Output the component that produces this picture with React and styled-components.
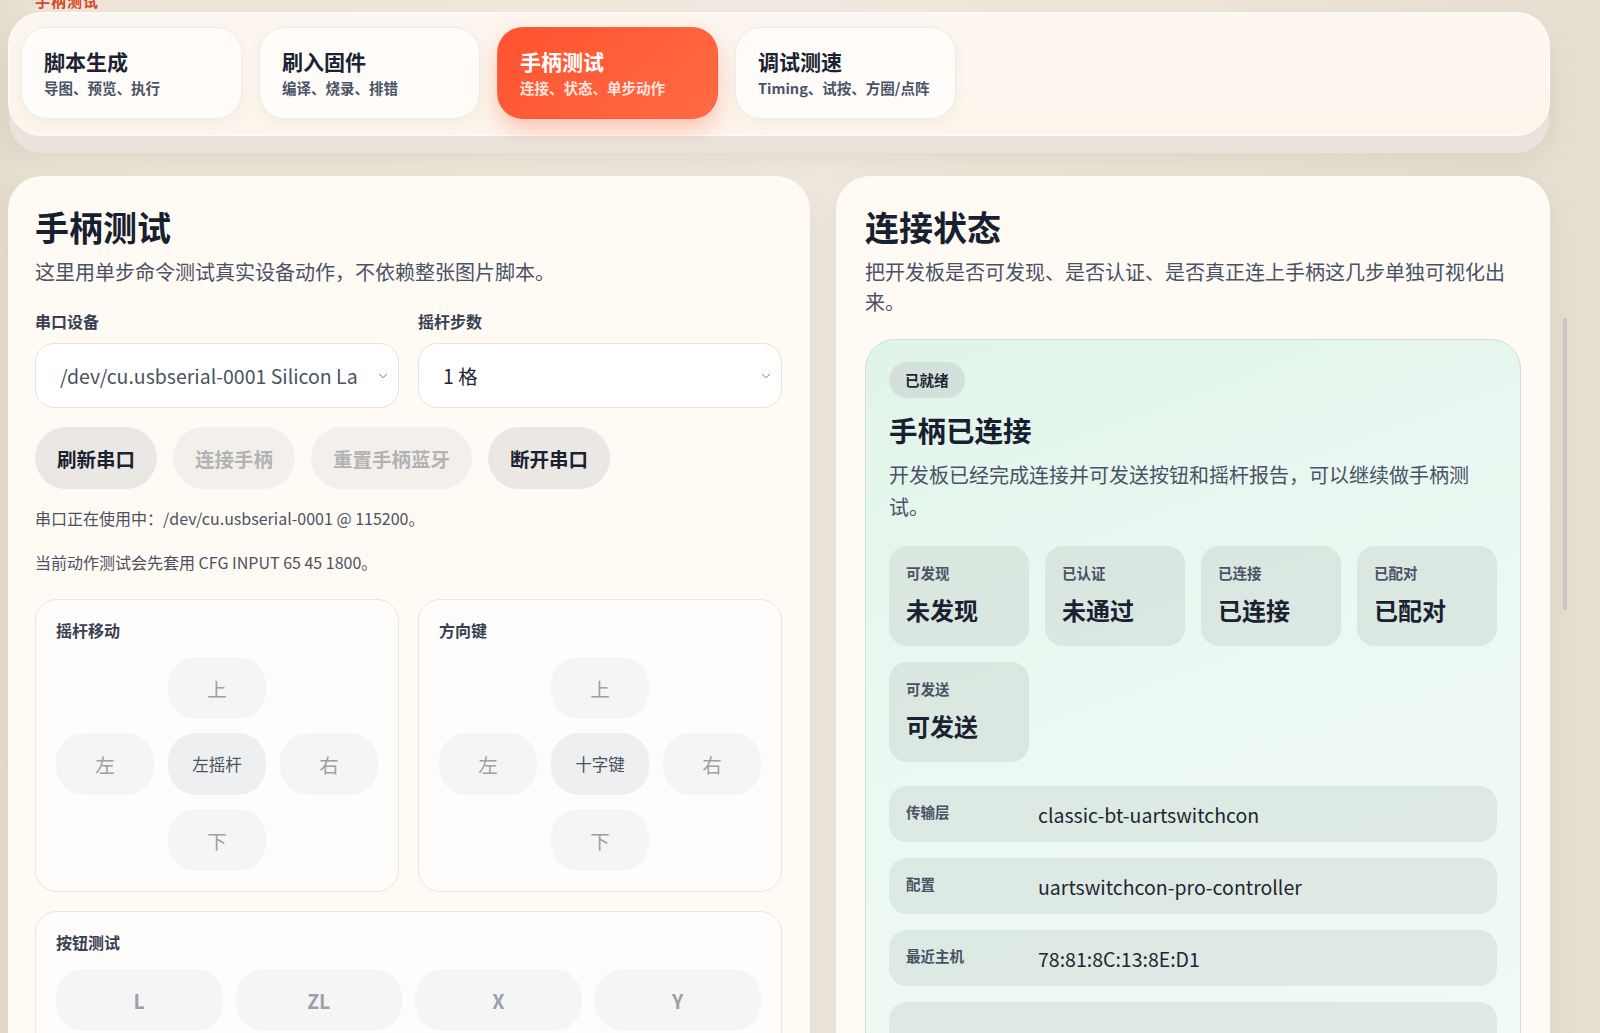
import styled, { createGlobalStyle } from "styled-components";
import { ChevronDown } from "lucide-react";

const tabs = [
  { title: "脚本生成", sub: "导图、预览、执行" },
  { title: "刷入固件", sub: "编译、烧录、排错" },
  { title: "手柄测试", sub: "连接、状态、单步动作", active: true },
  { title: "调试测速", sub: "Timing、试按、方圈/点阵" },
];

const flags = [
  { label: "可发现", value: "未发现" },
  { label: "已认证", value: "未通过" },
  { label: "已连接", value: "已连接" },
  { label: "已配对", value: "已配对" },
  { label: "可发送", value: "可发送" },
];

const infos = [
  { label: "传输层", value: "classic-bt-uartswitchcon" },
  { label: "配置", value: "uartswitchcon-pro-controller" },
  { label: "最近主机", value: "78:81:8C:13:8E:D1" },
  { label: "", value: "" },
];

const App = () => {
  return (
    <>
      <GlobalStyle />
      <ScrollThumb />
      <Page>
        <Kicker>手柄测试</Kicker>
        <Nav>
          {tabs.map((t) => (
            <Tab key={t.title} $active={t.active}>
              <TabTitle>{t.title}</TabTitle>
              <TabSub $active={t.active}>{t.sub}</TabSub>
            </Tab>
          ))}
        </Nav>

        <Columns>
          <Panel>
            <Title>手柄测试</Title>
            <Lead>这里用单步命令测试真实设备动作，不依赖整张图片脚本。</Lead>

            <FieldRow>
              <Field>
                <Label>串口设备</Label>
                <SelectWrap>
                  <Select $muted defaultValue="a">
                    <option value="a">/dev/cu.usbserial-0001 Silicon Labs</option>
                  </Select>
                  <Chevron size={14} strokeWidth={1.4} />
                </SelectWrap>
              </Field>
              <Field>
                <Label>摇杆步数</Label>
                <SelectWrap>
                  <Select defaultValue="1">
                    <option value="1">1 格</option>
                  </Select>
                  <Chevron size={14} strokeWidth={1.4} />
                </SelectWrap>
              </Field>
            </FieldRow>

            <ButtonRow>
              <Pill>刷新串口</Pill>
              <Pill $disabled>连接手柄</Pill>
              <Pill $disabled>重置手柄蓝牙</Pill>
              <Pill>断开串口</Pill>
            </ButtonRow>

            <Note>串口正在使用中：/dev/cu.usbserial-0001 @ 115200。</Note>
            <Note $gap>当前动作测试会先套用 CFG INPUT 65 45 1800。</Note>

            <PadRow>
              <Card>
                <CardTitle>摇杆移动</CardTitle>
                <Cross>
                  <span />
                  <Key>上</Key>
                  <span />
                  <Key>左</Key>
                  <Key $center>左摇杆</Key>
                  <Key>右</Key>
                  <span />
                  <Key>下</Key>
                  <span />
                </Cross>
              </Card>
              <Card>
                <CardTitle>方向键</CardTitle>
                <Cross>
                  <span />
                  <Key>上</Key>
                  <span />
                  <Key>左</Key>
                  <Key $center>十字键</Key>
                  <Key>右</Key>
                  <span />
                  <Key>下</Key>
                  <span />
                </Cross>
              </Card>
            </PadRow>

            <Card $wide>
              <CardTitle>按钮测试</CardTitle>
              <ButtonGrid>
                {["L", "ZL", "X", "Y", "R", "ZR", "A", "B"].map((b) => (
                  <Key key={b} $bold>{b}</Key>
                ))}
              </ButtonGrid>
            </Card>
          </Panel>

          <Panel $right>
            <Title>连接状态</Title>
            <Lead $narrow>把开发板是否可发现、是否认证、是否真正连上手柄这几步单独可视化出来。</Lead>

            <StatusCard>
              <Badge>已就绪</Badge>
              <StatusTitle>手柄已连接</StatusTitle>
              <StatusText>开发板已经完成连接并可发送按钮和摇杆报告，可以继续做手柄测试。</StatusText>

              <FlagGrid>
                {flags.map((f) => (
                  <Flag key={f.label}>
                    <FlagLabel>{f.label}</FlagLabel>
                    <FlagValue>{f.value}</FlagValue>
                  </Flag>
                ))}
              </FlagGrid>

              <InfoList>
                {infos.map((i, ind) => (
                  <InfoRow key={ind}>
                    <InfoLabel>{i.label}</InfoLabel>
                    <InfoValue>{i.value}</InfoValue>
                  </InfoRow>
                ))}
              </InfoList>
            </StatusCard>
          </Panel>
        </Columns>
      </Page>
    </>
  );
};
export default App;

const GlobalStyle = createGlobalStyle`
  html, body {
    margin: 0;
    padding: 0;
    height: 1033px;
    overflow: hidden;
  }
  body {
    background: linear-gradient(90deg, #e4dccd 0%, #ece5d8 3%, #efe9df 50%, #e6decf 100%);
    font-family: "Noto Sans CJK SC", "Noto Sans", sans-serif;
    color: #1b2333;
  }
  * { box-sizing: border-box; }
`;

const ScrollThumb = styled.div`
  position: fixed;
  right: 33px;
  top: 318px;
  width: 4px;
  height: 292px;
  border-radius: 2px;
  background: #c9c6c1;
`;

const Page = styled.div`
  padding: 0 50px 0 8px;
`;

const Kicker = styled.div`
  margin: -9px 0 0 27px;
  height: 21px;
  font-size: 15px;
  line-height: 20px;
  font-weight: 700;
  color: #d8472a;
  letter-spacing: 1px;
`;

const Nav = styled.nav`
  display: flex;
  gap: 17px;
  padding: 14px 12px 16px;
  background: linear-gradient(180deg, #fbf6ef 0%, #fcf5ec 100%);
  border: 1px solid rgba(255, 255, 255, 0.8);
  border-radius: 34px;
  box-shadow: 0 18px 0 -1px #e9e4db, 0 22px 26px rgba(160, 140, 110, 0.18);
  margin-bottom: 40px;
`;

const Tab = styled.div`
  width: 221px;
  height: 92px;
  padding: 19px 22px;
  border-radius: 26px;
  display: flex;
  flex-direction: column;
  gap: 3px;
  background: ${(p) =>
    p.$active ? "linear-gradient(135deg, #ff5330 0%, #ff6a44 100%)" : "#fffcfa"};
  border: 1px solid ${(p) => (p.$active ? "transparent" : "#f1ebe4")};
  color: ${(p) => (p.$active ? "#ffffff" : "#1b2333")};
  box-shadow: ${(p) =>
    p.$active
      ? "0 10px 22px rgba(255, 92, 56, 0.32)"
      : "0 4px 12px rgba(170, 150, 120, 0.08)"};
`;

const TabTitle = styled.div`
  font-size: 21px;
  line-height: 28px;
  font-weight: 700;
`;

const TabSub = styled.div`
  font-size: 14.5px;
  line-height: 20px;
  font-weight: 700;
  color: ${(p) => (p.$active ? "rgba(255,255,255,0.85)" : "#4a5266")};
`;

const Columns = styled.div`
  display: grid;
  grid-template-columns: 802fr 714fr;
  gap: 26px;
  align-items: start;
`;

const Panel = styled.section`
  background: #fffaf3;
  border-radius: 34px;
  padding: 31px ${(p) => (p.$right ? "29px" : "28px")} 40px ${(p) => (p.$right ? "29px" : "27px")};
  min-height: 900px;
  box-shadow: 0 10px 30px rgba(150, 130, 100, 0.12);
`;

const Title = styled.h1`
  margin: 0;
  font-size: 34px;
  line-height: 40px;
  font-weight: 700;
  color: #17202f;
`;

const Lead = styled.p`
  margin: 10px 0 0;
  font-size: 20px;
  line-height: 30px;
  color: #4a5266;
  max-width: ${(p) => (p.$narrow ? "650px" : "none")};
`;

const FieldRow = styled.div`
  display: grid;
  grid-template-columns: 1fr 1fr;
  gap: 19px;
  margin-top: 23px;
`;

const Field = styled.div`
  display: flex;
  flex-direction: column;
  gap: 11px;
`;

const Label = styled.div`
  font-size: 16px;
  line-height: 22px;
  font-weight: 700;
  color: #374052;
`;

const SelectWrap = styled.div`
  position: relative;
`;

const Select = styled.select`
  width: 100%;
  height: 65px;
  appearance: none;
  border: 1px solid #e8e3dd;
  border-radius: 19px;
  background: #ffffff;
  padding: 0 40px 0 24px;
  font-family: "Noto Sans CJK SC", sans-serif;
  font-size: 19.5px;
  color: ${(p) => (p.$muted ? "#4b5262" : "#1f2633")};
  outline: none;
`;

const Chevron = styled(ChevronDown)`
  position: absolute;
  right: 9px;
  top: 26px;
  color: #555b66;
  pointer-events: none;
`;

const ButtonRow = styled.div`
  display: flex;
  gap: 16px;
  margin-top: 19px;
`;

const Pill = styled.button`
  height: 62px;
  padding: 0 22px;
  border: none;
  border-radius: 31px;
  font-family: "Noto Sans CJK SC", sans-serif;
  font-size: 19.5px;
  font-weight: 700;
  background: ${(p) => (p.$disabled ? "#f3f0eb" : "#ebe8e3")};
  color: ${(p) => (p.$disabled ? "#b3b3b3" : "#1a2130")};
`;

const Note = styled.p`
  margin: ${(p) => (p.$gap ? "20px" : "17px")} 0 0;
  font-size: 16px;
  line-height: 24px;
  color: #4b5262;
`;

const PadRow = styled.div`
  display: grid;
  grid-template-columns: 1fr 1fr;
  gap: 19px;
  margin-top: 25px;
`;

const Card = styled.div`
  background: #fffdfb;
  border: 1px solid #ebe6df;
  border-radius: 22px;
  padding: 19px 20px 20px;
  margin-top: ${(p) => (p.$wide ? "19px" : "0")};
`;

const CardTitle = styled.div`
  font-size: 16px;
  line-height: 22px;
  font-weight: 700;
  color: #374052;
  margin-bottom: 16px;
`;

const Cross = styled.div`
  display: grid;
  grid-template-columns: repeat(3, 1fr);
  gap: 14px;
`;

const Key = styled.div`
  height: 62px;
  border-radius: 28px;
  display: flex;
  align-items: center;
  justify-content: center;
  background: ${(p) => (p.$center ? "#eeeff1" : "#f5f5f5")};
  color: ${(p) => (p.$center ? "#4b5262" : "#9ca0a8")};
  font-size: ${(p) => (p.$center ? "16.5px" : "19.5px")};
  font-weight: ${(p) => (p.$bold ? 700 : 400)};
`;

const ButtonGrid = styled.div`
  display: grid;
  grid-template-columns: repeat(4, 1fr);
  gap: 13px;
`;

const StatusCard = styled.div`
  margin-top: 22px;
  border: 1px solid #c8e3d5;
  border-radius: 30px;
  padding: 22px 23px 30px;
  background: linear-gradient(160deg, #e1f4ea 0%, #ebf8f1 45%, #f1faf5 100%);
`;

const Badge = styled.span`
  display: inline-block;
  height: 36px;
  line-height: 36px;
  padding: 0 16px;
  border-radius: 18px;
  background: #d4e1db;
  font-size: 14.5px;
  font-weight: 700;
  color: #1f2633;
`;

const StatusTitle = styled.h2`
  margin: 14px 0 0;
  font-size: 28.5px;
  line-height: 36px;
  font-weight: 700;
  color: #17202f;
`;

const StatusText = styled.p`
  margin: 11px 0 0;
  font-size: 20px;
  line-height: 32px;
  color: #4a5266;
  max-width: 590px;
`;

const FlagGrid = styled.div`
  display: grid;
  grid-template-columns: repeat(4, 1fr);
  gap: 16px;
  margin-top: 23px;
`;

const Flag = styled.div`
  height: 100px;
  border-radius: 18px;
  background: rgba(205, 218, 212, 0.55);
  padding: 17px 17px 0;
`;

const FlagLabel = styled.div`
  font-size: 14.5px;
  line-height: 20px;
  font-weight: 700;
  color: #4a5266;
`;

const FlagValue = styled.div`
  margin-top: 11px;
  font-size: 24px;
  line-height: 32px;
  font-weight: 700;
  color: #1a2130;
`;

const InfoList = styled.div`
  display: flex;
  flex-direction: column;
  gap: 16px;
  margin-top: 24px;
`;

const InfoRow = styled.div`
  display: grid;
  grid-template-columns: 132px 1fr;
  align-items: center;
  height: 56px;
  padding: 0 17px;
  border-radius: 18px;
  background: rgba(205, 218, 212, 0.5);
`;

const InfoLabel = styled.div`
  font-size: 14.5px;
  font-weight: 700;
  color: #4a5266;
  margin-top: -5px;
`;

const InfoValue = styled.div`
  font-size: 19.5px;
  color: #1f2633;
`;
